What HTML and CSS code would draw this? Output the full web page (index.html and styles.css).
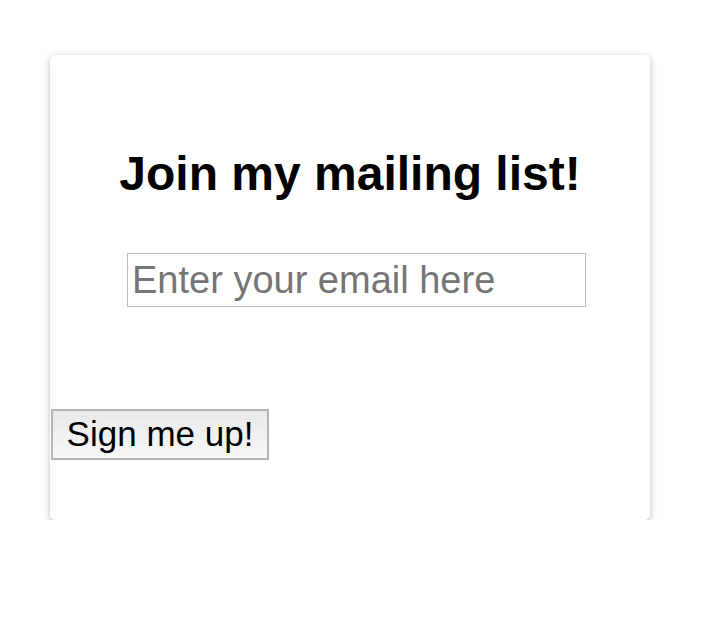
FILE: index.html
```html
<!DOCTYPE html>
<html>
<head>
<meta charset="utf-8">
<link rel="stylesheet" href="styles.css">
</head>
<body>
<div class="card">
  <h1 class="title">Join my mailing list!</h1>
  <div class="field-row">
    <input class="email" type="email" placeholder="Enter your email here">
  </div>
  <div class="button-row">
    <button class="signup" type="button">Sign me up!</button>
  </div>
</div>
</body>
</html>
```

FILE: styles.css
```css
html, body {
  margin: 0;
  padding: 0;
  background: #ffffff;
}

body {
  font-family: "Liberation Sans", Arial, Helvetica, sans-serif;
  padding-top: 55px;
}

.card {
  box-sizing: border-box;
  width: 600px;
  margin-left: 50px;
  padding: 91px 0 60px 0;
  background: #ffffff;
  border-radius: 5px;
  box-shadow: 0 2px 7px rgba(0, 0, 0, 0.28);
  display: flex;
  flex-direction: column;
}

.title {
  margin: 0;
  font-size: 48px;
  line-height: 56px;
  font-weight: bold;
  color: #000000;
  text-align: center;
}

.field-row {
  margin-top: 51px;
  display: flex;
  padding-left: 77px;
}

.email {
  box-sizing: border-box;
  width: 459px;
  height: 54px;
  border: 1px solid #bdbdbd;
  padding: 0 0 0 4px;
  margin: 0;
  font-family: "Liberation Sans", Arial, Helvetica, sans-serif;
  font-size: 38px;
  color: #000;
  background: #fff;
  outline: none;
}

.email::placeholder {
  color: #757575;
}

.button-row {
  margin-top: 102px;
  display: flex;
}

.signup {
  box-sizing: border-box;
  width: 218px;
  height: 51px;
  margin: 0 0 0 1px;
  padding: 0 0 2px 0;
  border: 2px solid #b4b4b4;
  border-radius: 0;
  background: linear-gradient(#e9e9e9, #f7f7f7);
  font-family: "Liberation Sans", Arial, Helvetica, sans-serif;
  font-size: 35px;
  color: #000;
}
```
